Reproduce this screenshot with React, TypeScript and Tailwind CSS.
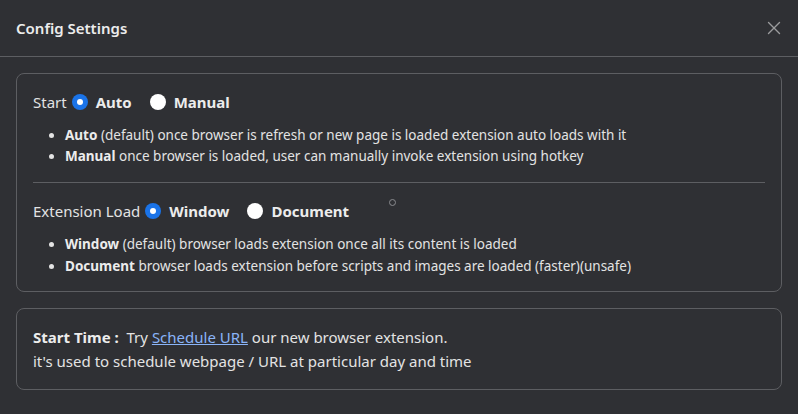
import { X } from "lucide-react";

function Radio({ checked, label }: { checked: boolean; label: string }) {
    return (
        <span className="flex items-center gap-[8px]">
            {checked ? (
                <span className="w-[16px] h-[16px] rounded-full bg-[#1a73e8] flex items-center justify-center">
                    <span className="w-[6px] h-[6px] rounded-full bg-white" />
                </span>
            ) : (
                <span className="w-[16px] h-[16px] rounded-full bg-white" />
            )}
            <span className="font-bold text-[#ececec]">{label}</span>
        </span>
    );
}

export default function App() {
    return (
        <div
            className="w-[798px] h-[414px] bg-[#2f3034] text-[#e3e3e3] overflow-hidden"
            style={{ fontFamily: '"Noto Sans", "Open Sans", sans-serif' }}
        >
            <div className="h-[57px] px-4 flex items-center justify-between border-b border-[#5d5e62]">
                <h2 className="text-[15px] font-semibold text-[#ececec]">Config Settings</h2>
                <X className="w-[22px] h-[22px] text-[#9b9b9d] -mr-[3px]" strokeWidth={1.5} />
            </div>

            <div className="p-4 flex flex-col gap-4">
                <div className="relative border border-[#5d5e62] rounded-lg px-4 pt-[18px] pb-[14px]">
                    <div className="flex items-center gap-[5px] text-[15px] h-[20px]">
                        <span>Start</span>
                        <div className="flex items-center gap-[18px]">
                            <Radio checked label="Auto" />
                            <Radio checked={false} label="Manual" />
                        </div>
                    </div>
                    <ul className="list-disc pl-[32px] mt-[13px] text-[13.5px] leading-[21px]">
                        <li>
                            <b className="text-[#ececec]">Auto</b> (default) once browser is refresh or new page is loaded extension auto loads with it
                        </li>
                        <li>
                            <b className="text-[#ececec]">Manual</b> once browser is loaded, user can manually invoke extension using hotkey
                        </li>
                    </ul>
                    <div className="border-t border-[#5d5e62] mt-[15px] mb-[18px]" />
                    <div className="flex items-center gap-[5px] text-[15px] h-[20px]">
                        <span>Extension Load</span>
                        <div className="flex items-center gap-[18px]">
                            <Radio checked label="Window" />
                            <Radio checked={false} label="Document" />
                        </div>
                    </div>
                    <ul className="list-disc pl-[32px] mt-[12px] text-[13.5px] leading-[22px]">
                        <li>
                            <b className="text-[#ececec]">Window</b> (default) browser loads extension once all its content is loaded
                        </li>
                        <li>
                            <b className="text-[#ececec]">Document</b> browser loads extension before scripts and images are loaded (faster)(unsafe)
                        </li>
                    </ul>
                    {/* stray cursor ring */}
                    <span className="absolute left-[372px] top-[125px] w-[7px] h-[7px] rounded-full border border-[#8a8b8f]" />
                </div>

                <div className="border border-[#5d5e62] rounded-lg px-4 pt-[16px] pb-[16px] text-[15px] leading-[24px]">
                    <p>
                        <b className="text-[#ececec]">Start Time :</b>&nbsp; Try{" "}
                        <a className="text-[#8ab4f8] underline">Schedule URL</a> our new browser extension.
                    </p>
                    <p>it's used to schedule webpage / URL at particular day and time</p>
                </div>
            </div>
        </div>
    );
}
